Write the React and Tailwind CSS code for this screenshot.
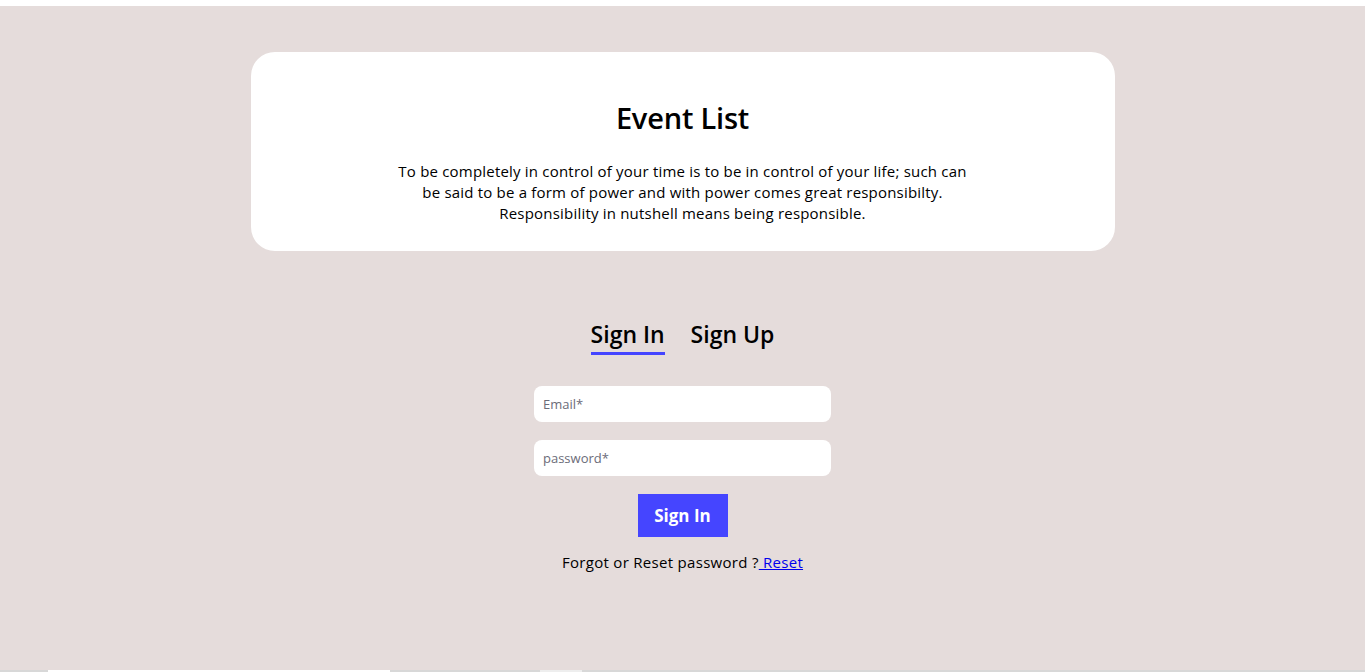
import React, { useState } from "react";

export default function App() {
  const [tab, setTab] = useState("in");
  const [email, setEmail] = useState("");
  const [password, setPassword] = useState("");

  return (
    <div className="w-full h-[672px] bg-white flex flex-col overflow-hidden" style={{ fontFamily: '"Open Sans", "Noto Sans", sans-serif' }}>
      <div className="h-[6px] bg-white" />
      <div className="flex-1 bg-[#e5dcdb] flex flex-col items-center pt-[46px]">
        {/* header card */}
        <div className="w-[864px] h-[199px] bg-white rounded-[24px] flex flex-col items-center pt-[47px]">
          <h1 className="text-[29px] leading-[38px] font-semibold text-black tracking-[-0.2px]">Event List</h1>
          <p className="mt-[24px] text-center text-[15px] leading-[21px] tracking-[0.2px] text-black">
            To be completely in control of your time is to be in control of your life; such can
            <br />
            be said to be a form of power and with power comes great responsibilty.
            <br />
            Responsibility in nutshell means being responsible.
          </p>
        </div>

        {/* tabs */}
        <div className="mt-[68px] flex gap-[26px]">
          <button onClick={() => setTab("in")} className="flex flex-col items-center">
            <span className="text-[23px] leading-[30px] font-semibold text-black">Sign In</span>
            <span className={"mt-[3px] h-[3px] w-full " + (tab === "in" ? "bg-[#4444ff]" : "bg-transparent")} />
          </button>
          <button onClick={() => setTab("up")} className="flex flex-col items-center">
            <span className="text-[23px] leading-[30px] font-semibold text-black">Sign Up</span>
            <span className={"mt-[3px] h-[3px] w-full " + (tab === "up" ? "bg-[#4444ff]" : "bg-transparent")} />
          </button>
        </div>

        {/* form */}
        <div className="mt-[31px] flex flex-col items-center">
          <input
            className="w-[297px] h-[36px] bg-white rounded-[8px] px-[9px] text-[13px] text-black placeholder-[#6b6b78] outline-none"
            placeholder="Email*"
            value={email}
            onChange={(e) => setEmail(e.target.value)}
          />
          <input
            type="password"
            className="mt-[18px] w-[297px] h-[36px] bg-white rounded-[8px] px-[9px] text-[13px] text-black placeholder-[#6b6b78] outline-none"
            placeholder="password*"
            value={password}
            onChange={(e) => setPassword(e.target.value)}
          />
          <button className="mt-[18px] w-[90px] h-[43px] bg-[#4545ff] text-white text-[17px] font-bold">Sign In</button>
          <p className="mt-[15px] text-[15px] leading-[20px] tracking-[0.3px] text-black">
            Forgot or Reset password ?<a href="#" className="text-[#0000ee] underline"> Reset</a>
          </p>
        </div>
      </div>
      <div className="h-[2px] bg-[#d8d8d8] flex">
        <div className="ml-[48px] w-[342px] bg-white" />
        <div className="ml-[150px] w-[42px] bg-[#eeeeee]" />
      </div>
    </div>
  );
}
